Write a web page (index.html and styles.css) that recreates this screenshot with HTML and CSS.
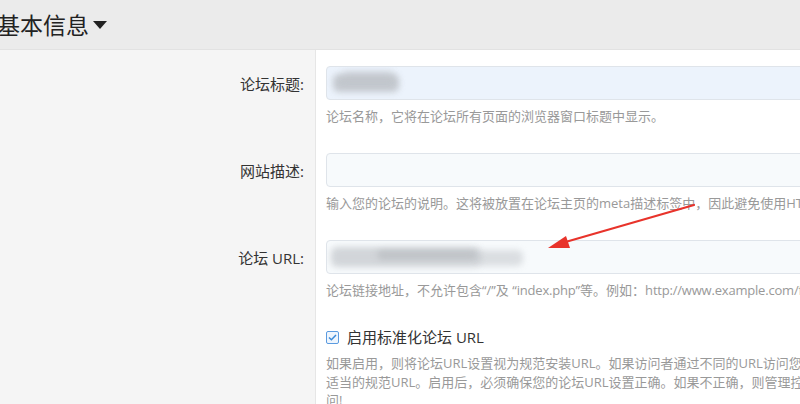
FILE: index.html
```html
<!DOCTYPE html>
<html lang="zh-CN">
<head>
<meta charset="utf-8">
<title>基本信息</title>
<link rel="stylesheet" href="styles.css">
</head>
<body>
<div class="page">
  <div class="header">
    <h2 class="title">基本信息<svg class="caret" width="14" height="8" viewBox="0 0 14 8"><path d="M0 0h14L7 8z" fill="#222"/></svg></h2>
  </div>
  <div class="form">
    <div class="row">
      <div class="label">论坛标题:</div>
      <div class="field">
        <div class="input autofill"><span class="blur b1"></span><span class="blur b2"></span></div>
        <div class="help">论坛名称，它将在论坛所有页面的浏览器窗口标题中显示。</div>
      </div>
    </div>
    <div class="row">
      <div class="label">网站描述:</div>
      <div class="field">
        <div class="input"></div>
        <div class="help">输入您的论坛的说明。这将被放置在论坛主页的meta描述标签中，因此避免使用HTML标签。</div>
      </div>
    </div>
    <div class="row">
      <div class="label">论坛 URL:</div>
      <div class="field">
        <div class="input"><span class="blur b3"></span><span class="blur b4"></span><span class="blur b5"></span></div>
        <div class="help">论坛链接地址，不允许包含“/”及 “<span class="latin">index.php</span>”等。例如：<span class="latin">http://www.example.com/forum</span></div>
      </div>
    </div>
    <div class="row">
      <div class="label"></div>
      <div class="field">
        <label class="check"><span class="box"><svg width="9" height="7" viewBox="0 0 9 7"><path d="M1 3.5l2.4 2.3L8 1" fill="none" stroke="#3b8ad8" stroke-width="1.5"/></svg></span>启用标准化论坛 URL</label>
        <div class="help multi">如果启用，则将论坛URL设置视为规范安装URL。如果访问者通过不同的URL访问您的论坛，他们将被重定向到<br>适当的规范URL。启用后，必须确保您的论坛URL设置正确。如果不正确，则管理控制台可能无法访<br>问!</div>
      </div>
    </div>
  </div>
  <svg class="arrow" width="800" height="404" viewBox="0 0 800 404">
    <line x1="694" y1="205" x2="562" y2="243" stroke="#e8332b" stroke-width="2.2" stroke-linecap="round"/>
    <path d="M548 248 L566 236 L570 248 Z" fill="#e8332b"/>
  </svg>
</div>
</body>
</html>
```
FILE: styles.css
```css
html, body {
  margin: 0;
  padding: 0;
  overflow: hidden;
  background: #fff;
}
.page {
  position: relative;
  width: 800px;
  height: 404px;
  overflow: hidden;
  font-family: "Open Sans", "Noto Sans CJK SC", sans-serif;
  color: #333;
}
.header {
  height: 50px;
  background: #ebebeb;
  border-bottom: 1px solid #e2e2e2;
  box-sizing: border-box;
  display: flex;
  align-items: center;
}
.title {
  margin: 0 0 0 -3px;
  font-size: 23px;
  font-weight: normal;
  color: #222;
  line-height: 30px;
  display: flex;
  align-items: center;
  white-space: nowrap;
}
.caret {
  margin-left: 4px;
  margin-top: 1px;
}
.form {
  display: flex;
  flex-direction: column;
}
.row {
  display: grid;
  grid-template-columns: 316px 1fr;
}
.label {
  background: #f5f5f5;
  border-right: 1px solid #e6e6e6;
  text-align: right;
  padding: 16px 11px 0 0;
  font-size: 15px;
  line-height: 36px;
  color: #333;
  white-space: nowrap;
}
.field {
  padding: 16px 0 12px 10px;
  white-space: nowrap;
  min-width: 0;
}
.input {
  width: 560px;
  height: 34px;
  box-sizing: border-box;
  border: 1px solid #dfe4ea;
  border-radius: 4px;
  background: #f7fafc;
  display: flex;
  align-items: center;
  position: relative;
  overflow: hidden;
}
.input.autofill {
  background: #ecf3fc;
}
.blur {
  position: absolute;
  background: #b9bdc2;
  filter: blur(3px);
  border-radius: 6px;
}
.b1 { left: 6px; top: 7px; width: 66px; height: 18px; opacity: 0.8; }
.b2 { left: 16px; top: 4px; width: 50px; height: 8px; opacity: 0.4; }
.b3 { left: 4px; top: 6px; width: 150px; height: 20px; opacity: 0.6; }
.b4 { left: 50px; top: 9px; width: 100px; height: 10px; opacity: 0.5; background: #aeb2b6; }
.b5 { left: 150px; top: 9px; width: 46px; height: 16px; opacity: 0.45; }
.help {
  margin-top: 7px;
  font-size: 13px;
  line-height: 18px;
  color: #999;
}
.latin {
  letter-spacing: -0.2px;
}
.help.multi {
  line-height: 18.5px;
  margin-top: 7px;
}
.check {
  display: flex;
  align-items: center;
  font-size: 15px;
  line-height: 20px;
  color: #333;
}
.box {
  width: 13px;
  height: 13px;
  box-sizing: border-box;
  border: 1px solid #5b9be0;
  border-radius: 2px;
  background: #eef5fd;
  display: flex;
  align-items: center;
  justify-content: center;
  margin-right: 8px;
}
.arrow {
  position: absolute;
  left: 0;
  top: 0;
  pointer-events: none;
}
```
